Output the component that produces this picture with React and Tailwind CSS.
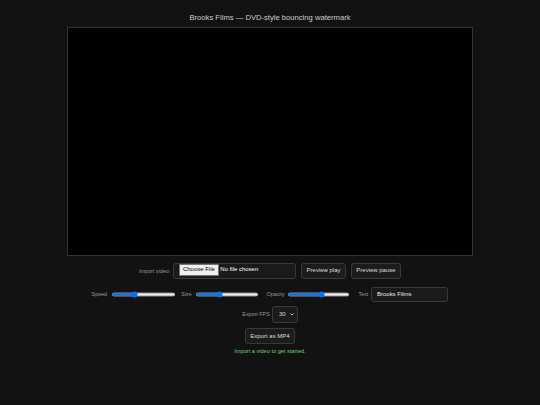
import React from "react";

export default function App() {
  const btn =
    "h-[36px] rounded-[6px] border border-[#3a3a3a] bg-[#1c1c1c] text-[#dddddd] text-[13.33px] whitespace-nowrap";
  const label = "text-[12px] text-[#9a9a9a] whitespace-nowrap";
  return (
    <div className="[zoom:0.45]">
      <div
        className="w-[1200px] h-[900px] bg-[#121212] flex flex-col items-center"
        style={{ fontFamily: '"Liberation Sans", Arial, sans-serif' }}
      >
        <h1 className="pt-[28px] text-[17px] leading-[20px] text-[#cccccc] font-normal">
          Brooks Films — DVD-style bouncing watermark
        </h1>
        <div className="mt-[12px] w-[902px] h-[508px] bg-black border border-[#333333]" />

        <div className="mt-[16px] flex items-center">
          <span className={label}>Import video:</span>
          <input
            type="file"
            className="ml-[6px] h-[36px] w-[274px] px-[12px] rounded-[6px] border border-[#3a3a3a] bg-[#1a1a1a] text-[#ffffff] text-[13.33px] file:mr-[4px] file:px-[6px] file:py-[1px] file:bg-[#efefef] file:text-black file:border file:border-[#767676] file:rounded-[2px] file:text-[13.33px]"
          />
          <button className={`ml-[11px] w-[100px] ${btn}`}>Preview play</button>
          <button className={`ml-[11px] w-[111px] ${btn}`}>Preview pause</button>
        </div>

        <div className="mt-[18px] flex items-center">
          <span className={label}>Speed</span>
          <input type="range" defaultValue={35} className="ml-[8px] w-[145px]" />
          <span className={`ml-[12px] ${label}`}>Size</span>
          <input type="range" defaultValue={37} className="ml-[7px] w-[142px]" />
          <span className={`ml-[17px] ${label}`}>Opacity</span>
          <input type="range" defaultValue={55} className="ml-[4px] w-[142px]" />
          <span className={`ml-[18px] ${label}`}>Text</span>
          <input
            type="text"
            defaultValue="Brooks Films"
            className="ml-[6px] h-[33px] w-[172px] px-[11px] rounded-[6px] border border-[#3a3a3a] bg-[#1a1a1a] text-[#eeeeee] text-[13.33px] outline-none"
          />
        </div>

        <div className="mt-[9px] flex items-center">
          <span className={label}>Export FPS</span>
          <div className="relative ml-[4px]">
            <select
              defaultValue="30"
              className="appearance-none h-[38px] w-[58px] pl-[14px] pr-[20px] rounded-[6px] border border-[#3a3a3a] bg-[#1c1c1c] text-[#dddddd] text-[13.33px] outline-none"
            >
              <option value="24">24</option>
              <option value="30">30</option>
              <option value="60">60</option>
            </select>
            <svg
              className="absolute right-[9px] top-[16px] pointer-events-none"
              width="9"
              height="6"
              viewBox="0 0 9 6"
              fill="none"
            >
              <path d="M1 1l3.5 3.5L8 1" stroke="#dddddd" strokeWidth="1.8" />
            </svg>
          </div>
        </div>

        <button className={`mt-[11px] w-[112px] h-[35px] ${btn}`}>Export as MP4</button>

        <div className="mt-[6px] text-[12.5px] text-[#6fcf6f]">
          Import a video to get started.
        </div>
      </div>
    </div>
  );
}
